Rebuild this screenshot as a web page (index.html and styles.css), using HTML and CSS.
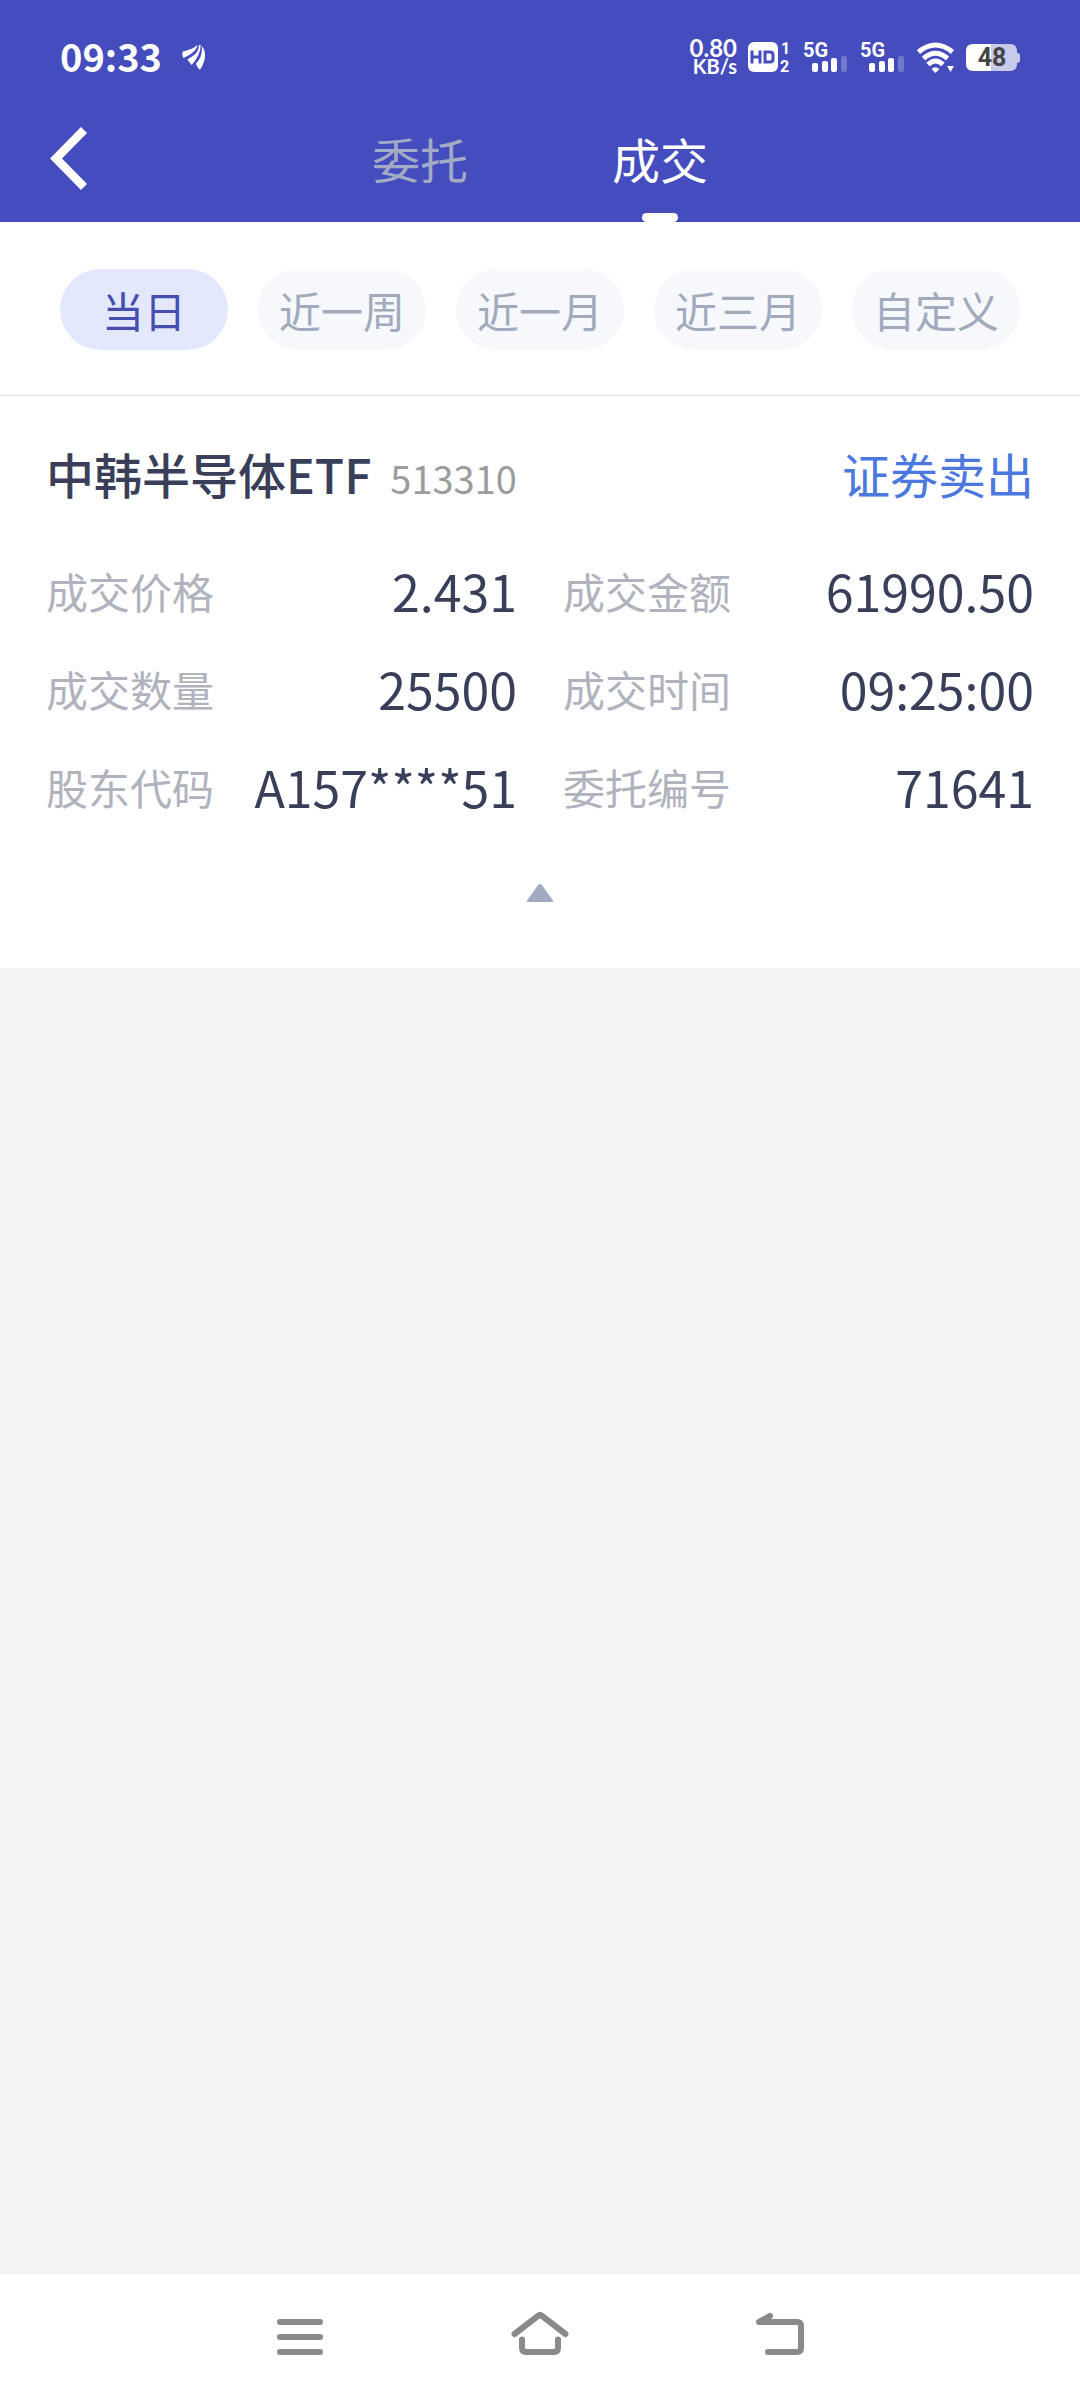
FILE: index.html
```html
<!DOCTYPE html>
<html lang="zh-CN">
<head>
<meta charset="utf-8">
<meta name="viewport" content="width=device-width, initial-scale=1">
<title>成交</title>
<link rel="stylesheet" href="styles.css">
</head>
<body>
<div class="app">
  <header class="header">
    <div class="status">
      <div class="status-side">
        <span class="clock">09:33</span>
        <svg width="24" height="26" viewBox="0 0 24 26" fill="#fff" aria-hidden="true">
          <path d="M1 7.500C6 6 11 5 15.500 1C14 8 8 10.500 1.500 14C0 12 0 9 1 7.500Z"/>
          <path d="M16.800 1C17 8 13 11 5.500 15.500L9.500 21C13 17.500 18.500 10 18.700 1Z"/>
          <path d="M19.800 2C25 8 23.500 18 18 25.800C16 24 14.500 22 14 19.500C18.500 15 20.500 9 19.800 2Z"/>
        </svg>
      </div>
      <div class="status-side status-right">
        <div class="speed"><span class="speed-num">0.80</span><span class="speed-unit">KB/s</span></div>
        <svg width="44" height="40" viewBox="0 -4 44 40" aria-hidden="true">
          <rect x="0" y="1" width="30" height="30" rx="6" fill="#fff"/>
          <path d="M4 9.500v13M12 9.500v13M4 16h8M17 11h5q3 0 3 3v4q0 3-3 3h-5z" fill="none" stroke="#444cbe" stroke-width="3"/>
          <text x="33" y="13" class="tiny">1</text>
          <text x="32" y="31" class="tiny">2</text>
        </svg>
        <svg width="46" height="40" viewBox="0 -4 46 40" fill="#fff" aria-hidden="true">
          <text x="0" y="16" class="net">5G</text>
          <rect x="9" y="22" width="6" height="9" rx="2"/><rect x="19" y="20" width="6" height="11" rx="2"/><rect x="28" y="17" width="6" height="14" rx="2"/><rect x="38" y="15" width="6" height="16" rx="2" opacity=".25"/>
        </svg>
        <svg width="46" height="40" viewBox="0 -4 46 40" fill="#fff" aria-hidden="true">
          <text x="0" y="16" class="net">5G</text>
          <rect x="9" y="22" width="6" height="9" rx="2"/><rect x="19" y="20" width="6" height="11" rx="2"/><rect x="28" y="17" width="6" height="14" rx="2"/><rect x="38" y="15" width="6" height="16" rx="2" opacity=".25"/>
        </svg>
        <svg width="38" height="32" viewBox="0 0 38 32" aria-hidden="true">
          <g fill="none" stroke="#fff" stroke-width="5">
            <path d="M1.500 11Q18.500-3 35.500 11"/><path d="M6.500 17.500Q18.500 7 30.500 17.500"/><path d="M11 23.500Q18.500 16.500 26 23.500"/>
          </g>
          <path d="M14.500 28Q18.500 24.500 22.500 28L18.500 32ZM30 25h7l-3.500 6z" fill="#fff"/>
        </svg>
        <svg width="54" height="32" viewBox="0 -3 54 32" aria-hidden="true">
          <path d="M25 0h19q7 0 7 7v2q3 0 3 3v4q0 3-3 3v1q0 7-7 7h-19z" fill="#c8caec"/>
          <path d="M25 0H7Q0 0 0 7v13q0 7 7 7h18z" fill="#fff"/>
          <text x="26" y="22" class="charge">48</text>
        </svg>
      </div>
    </div>
    <nav class="titlebar">
      <button class="back" type="button" aria-label="返回">
        <svg width="38" height="64" viewBox="0 0 38 64" aria-hidden="true"><path d="M34 3L6 31.500L34 60" fill="none" stroke="#fff" stroke-width="8.500"/></svg>
      </button>
      <div class="tabs">
        <button class="tab" type="button">委托</button>
        <button class="tab tab-active" type="button" aria-current="page">成交</button>
      </div>
    </nav>
  </header>

  <main class="content">
    <div class="periods">
      <button class="chip chip-active" type="button" aria-pressed="true">当日</button>
      <button class="chip" type="button">近一周</button>
      <button class="chip" type="button">近一月</button>
      <button class="chip" type="button">近三月</button>
      <button class="chip" type="button">自定义</button>
    </div>
    <article class="deal">
      <div class="deal-head">
        <h1 class="name">中韩半导体ETF</h1>
        <span class="code">513310</span>
        <span class="side">证券卖出</span>
      </div>
      <dl class="fields">
        <div class="field"><dt>成交价格</dt><dd>2.431</dd></div>
        <div class="field"><dt>成交金额</dt><dd>61990.50</dd></div>
        <div class="field"><dt>成交数量</dt><dd>25500</dd></div>
        <div class="field"><dt>成交时间</dt><dd>09:25:00</dd></div>
        <div class="field"><dt>股东代码</dt><dd>A157****51</dd></div>
        <div class="field"><dt>委托编号</dt><dd>71641</dd></div>
      </dl>
      <button class="collapse" type="button" aria-label="收起">
        <svg width="28" height="20" viewBox="0 0 28 20" aria-hidden="true"><path d="M12.500 1.500Q14 .5 15.500 1.500L27 17.500Q27.500 19 26 19H2Q.5 19 1 17.500Z" fill="#a2aabd"/></svg>
      </button>
    </article>
  </main>

  <nav class="sysnav">
    <button class="key" type="button" aria-label="最近任务">
      <svg width="60" height="60" viewBox="0 0 60 60"><path d="M10 15H50M10 30H50M10 45H50"/></svg>
    </button>
    <button class="key" type="button" aria-label="主屏幕">
      <svg width="60" height="60" viewBox="0 0 60 60"><path d="M4.500 27L28.500 8.500Q30 7.200 31.500 8.500L55.500 27M12 32.500V41Q12 45 16 45H44Q48 45 48 41V32.500"/></svg>
    </button>
    <button class="key" type="button" aria-label="返回">
      <svg width="60" height="60" viewBox="0 0 60 60"><path d="M20 9L9 15H47Q51 15 51 19V41Q51 45 47 45H18"/></svg>
    </button>
  </nav>
</div>
</body>
</html>
```
FILE: styles.css
```css
* { box-sizing: border-box; }

body {
  margin: 0;
  background: #f3f4f6;
  color: #3a3f59;
  font-family: "Noto Sans CJK SC", sans-serif;
}

button {
  margin: 0;
  padding: 0;
  border: 0;
  background: none;
  color: inherit;
  font: inherit;
}

svg { display: block; }

.app {
  display: flex;
  flex-direction: column;
  min-height: 100vh;
}

/* header */
.header { background: #444cbe; color: #fff; }

.status {
  display: flex;
  justify-content: space-between;
  align-items: center;
  height: 98px;
  padding: 16px 60px 0;
}

.status-side { display: flex; align-items: center; gap: 20px; }
.status-right { gap: 11px; }

.clock { font-size: 38px; font-weight: 700; line-height: 44px; padding-bottom: 2px; }

.speed {
  display: flex;
  flex-direction: column;
  align-items: flex-end;
  font-family: Lato, sans-serif;
  font-weight: 700;
  line-height: 18px;
}
.speed-num { font-size: 24px; }
.speed-unit { font-size: 20px; }

.tiny, .net, .charge { font-family: Roboto, sans-serif; font-weight: 700; }
.tiny { fill: #fff; font-size: 16px; }
.net { fill: #fff; font-size: 20px; }
.charge { fill: #444; font-size: 25px; text-anchor: middle; }

.titlebar {
  display: grid;
  grid-template-columns: 1fr auto 1fr;
  height: 124px;
}

.back { justify-self: start; padding: 0 50px 2px; }

.tabs { display: flex; }

.tab {
  position: relative;
  width: 240px;
  padding-bottom: 4px;
  color: #a2aac6;
  font-size: 48px;
  line-height: 120px;
}
.tab-active { color: #fff; }
.tab-active::after {
  content: "";
  position: absolute;
  left: 50%;
  bottom: 0;
  width: 36px;
  height: 9px;
  margin-left: -18px;
  border-radius: 5px;
  background: #fff;
}

/* period filter */
.content { flex: 1; }

.periods {
  display: flex;
  gap: 30px;
  padding: 47px 60px 45px;
  border-bottom: 1px solid #e4e4e6;
  background: #fff;
}

.chip {
  flex: 1;
  border-radius: 42px;
  background: #f6f8fc;
  color: #a2aabd;
  font-size: 42px;
  line-height: 81px;
}
.chip-active { background: #e4e8fd; color: #464fb0; }

/* deal record */
.deal {
  padding: 37px 46px 44px;
  background: #fff;
}

.deal-head {
  display: flex;
  align-items: baseline;
  line-height: 80px;
}

.name { margin: 0; font-size: 48px; font-weight: 500; }
.code { margin-left: 19px; color: #9c9c9c; font-size: 38px; }
.side { margin-left: auto; color: #4a78de; font-size: 48px; }

.fields {
  display: grid;
  grid-template-columns: 1fr 1fr;
  column-gap: 46px;
  margin: 23px 0 0;
}

.field {
  display: flex;
  justify-content: space-between;
  align-items: center;
  height: 98px;
}
.field dt { color: #b0b3be; font-size: 42px; }
.field dd { margin: 0; font-size: 50px; }

.collapse {
  display: flex;
  justify-content: center;
  width: 100%;
  padding: 48px 0 21px;
}

/* system keys */
.sysnav {
  display: flex;
  justify-content: center;
  height: 126px;
  background: #fff;
}

.key {
  display: flex;
  justify-content: center;
  align-items: center;
  width: 240px;
}
.key path {
  fill: none;
  stroke: #8a8a8a;
  stroke-width: 6;
  stroke-linecap: round;
  stroke-linejoin: round;
}
```
